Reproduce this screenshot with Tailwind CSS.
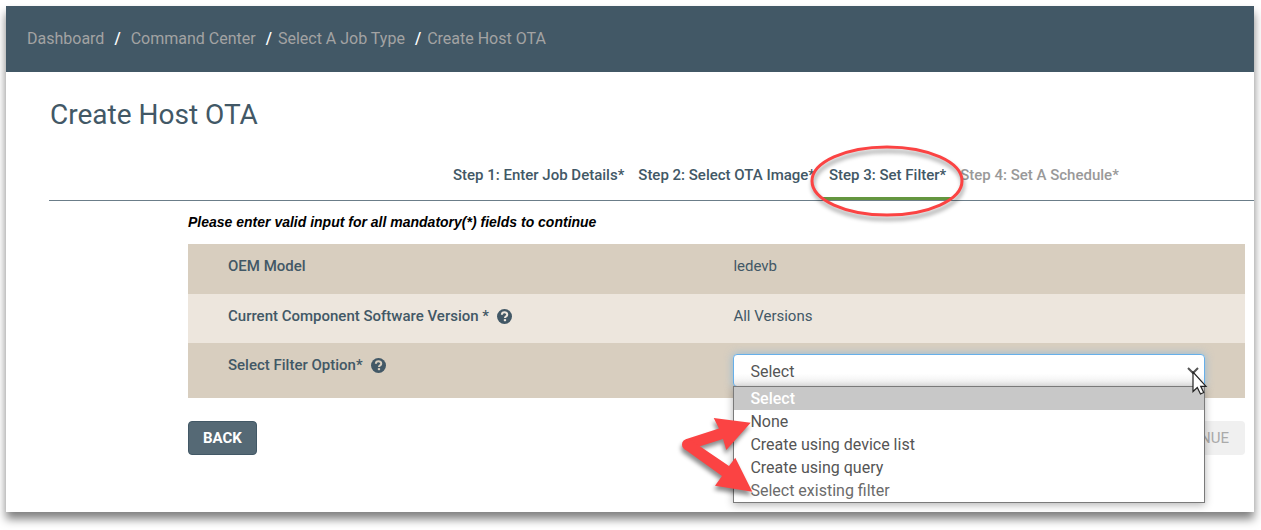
<!DOCTYPE html>
<html lang="en">
<head>
<meta charset="utf-8">
<title>Create Host OTA</title>
<script src="https://cdn.jsdelivr.net/npm/@tailwindcss/browser@4"></script>
</head>
<body class="min-h-screen bg-white p-1.5 pr-[7px] pb-[18px] font-['Roboto',sans-serif] text-[15px] leading-5 text-[#425866]">
<div class="bg-white pb-[57px] shadow-[0_7px_9px_0_rgba(0,0,0,0.5)]">
  <header class="bg-[#425866] px-[21px] py-[21px]">
    <nav aria-label="Breadcrumb">
      <ol class="flex text-base leading-6 text-[#a3a3a3]">
        <li><a href="#">Dashboard</a></li>
        <li class="px-2.5 font-medium text-white" aria-hidden="true">/</li>
        <li><a href="#">Command Center</a></li>
        <li class="pl-2.5 pr-1.5 font-medium text-white" aria-hidden="true">/</li>
        <li><a href="#">Select A Job Type</a></li>
        <li class="pl-2.5 pr-1.5 font-medium text-white" aria-hidden="true">/</li>
        <li><a href="#" aria-current="page">Create Host OTA</a></li>
      </ol>
    </nav>
  </header>

  <main class="pl-[43px]">
    <h1 class="pt-6 pl-px text-[28px] leading-[38px]">Create Host OTA</h1>

    <nav aria-label="Steps" class="mt-[25px] flex gap-0.5 border-b border-[#6b7d89] pl-[398px] font-medium whitespace-nowrap">
      <a href="#" class="px-1.5 pt-1.5 pb-[15px]">Step 1: Enter Job Details*</a>
      <a href="#" class="px-1.5 pt-1.5 pb-[15px]">Step 2: Select OTA Image*</a>
      <a href="#" aria-current="step" class="relative border-b-[3px] border-[#64963f] px-1.5 pt-1.5 pb-3">Step 3: Set Filter*
        <svg class="absolute -top-4 -left-4 h-[84px] w-[164px] drop-shadow-[1px_4px_2px_rgba(0,0,0,0.4)]" viewBox="0 0 164 84" fill="none" aria-hidden="true">
          <ellipse cx="80" cy="38" rx="75" ry="34" stroke="#fb4343" stroke-width="3"/>
        </svg>
      </a>
      <a href="#" class="px-1.5 pt-1.5 pb-[15px] text-[#999]">Step 4: Set A Schedule*</a>
    </nav>

    <form class="mr-[9px] ml-[139px]">
      <p class="pt-[11px] pb-3 font-['Liberation_Sans',Arial,sans-serif] text-sm leading-5 font-bold text-black italic">Please enter valid input for all mandatory(*) fields to continue</p>

      <table class="w-full table-fixed text-left align-top">
        <tbody>
          <tr class="bg-[#d8cebf]">
            <th scope="row" class="h-[50px] w-[51.6%] pt-3 pl-10 align-top font-medium">OEM Model</th>
            <td class="pt-3 align-top">ledevb</td>
          </tr>
          <tr class="bg-[#ede6dd]">
            <th scope="row" class="h-[49px] pt-3 pl-10 align-top font-medium">
              <span class="flex items-center gap-2">Current Component Software Version *
                <svg class="size-[15px]" viewBox="0 0 16 16" role="img" aria-label="Help"><circle cx="8" cy="8" r="8" fill="#425866"/><path d="M5.2 6.1C5.3 2.6 10.9 2.7 10.9 6c0 2-2.4 1.8-2.4 3.6" fill="none" stroke="#ede6dd" stroke-width="2.2"/><path d="M7.3 10.8h2.4v2.2H7.3z" fill="#ede6dd"/></svg>
              </span>
            </th>
            <td class="pt-3 align-top">All Versions</td>
          </tr>
          <tr class="bg-[#d8cebf]">
            <th scope="row" class="h-[55px] pt-3 pl-10 align-top font-medium">
              <span class="flex items-center gap-2"><label for="filter">Select Filter Option*</label>
                <svg class="size-[15px]" viewBox="0 0 16 16" role="img" aria-label="Help"><circle cx="8" cy="8" r="8" fill="#425866"/><path d="M5.2 6.1C5.3 2.6 10.9 2.7 10.9 6c0 2-2.4 1.8-2.4 3.6" fill="none" stroke="#d8cebf" stroke-width="2.2"/><path d="M7.3 10.8h2.4v2.2H7.3z" fill="#d8cebf"/></svg>
              </span>
            </th>
            <td class="pt-[11px] pr-10 align-top">
              <div class="relative text-base text-[#555]">
                <select id="filter" class="block h-[33px] w-full appearance-none rounded border border-[#66afe9] bg-white bg-linear-to-b from-white from-60% to-[#ececec] px-4 pt-0.5 shadow-[0_0_8px_rgba(102,175,233,0.6)] outline-none">
                  <option>Select</option>
                  <option>None</option>
                  <option>Create using device list</option>
                  <option>Create using query</option>
                  <option>Select existing filter</option>
                </select>
                <svg class="absolute top-[13px] right-1.5 h-2 w-3" viewBox="0 0 12 8" fill="none" stroke="#555" stroke-width="2" aria-hidden="true"><path d="M1 1l5 5 5-5"/></svg>

                <ul role="listbox" aria-label="Filter options" class="absolute top-full right-0 left-0 z-10 -mt-px border border-[#7a7a7a] bg-white leading-[23px] shadow-[0_2px_8px_rgba(0,0,0,0.3)]">
                  <li role="option" aria-selected="true" class="bg-[#c8c8c8] px-4 font-medium text-white">Select</li>
                  <li role="option" class="px-4">None</li>
                  <li role="option" class="px-4">Create using device list</li>
                  <li role="option" class="px-4">Create using query</li>
                  <li role="option" class="px-4 text-[#6b6b6b]">Select existing filter</li>
                </ul>

                <!-- Callout arrows to the "None" and "Select existing filter" options -->
                <svg class="absolute top-[54px] -left-[60px] z-20 h-[100px] w-[90px] drop-shadow-[-1px_4px_2px_rgba(0,0,0,0.45)]" viewBox="0 0 90 100" fill="#fb4343" aria-hidden="true">
                  <circle cx="14.5" cy="36.5" r="5.5"/>
                  <path d="M12.7 31.3L46 20.5 40.7 10l37 4.7L53.3 42 50 31 16 41.8z"/>
                  <path d="M17.7 32L56 58l6.3-8.3 17 34L42 77.7 49 68 11.3 41z"/>
                </svg>
                <!-- Mouse pointer -->
                <svg class="absolute top-[17px] -right-[3px] z-20 h-6 w-4" viewBox="-1 -1 16 24" fill="#fff" stroke="#222" stroke-width="1.2" aria-hidden="true"><path d="M0 0v19.500l4.300-4L7.500 22l3.200-1.500-3-6.200H13z"/></svg>
              </div>
            </td>
          </tr>
        </tbody>
      </table>

      <div class="mt-[23px] flex justify-between">
        <button type="button" class="h-[34px] rounded-sm border border-[#425866] bg-[#556975] px-[14px] font-bold text-white">BACK</button>
        <button type="submit" disabled class="h-[34px] rounded-sm bg-[#f0f0f0] px-4 text-[#aaa]">CONTINUE</button>
      </div>
    </form>
  </main>
</div>
</body>
</html>
